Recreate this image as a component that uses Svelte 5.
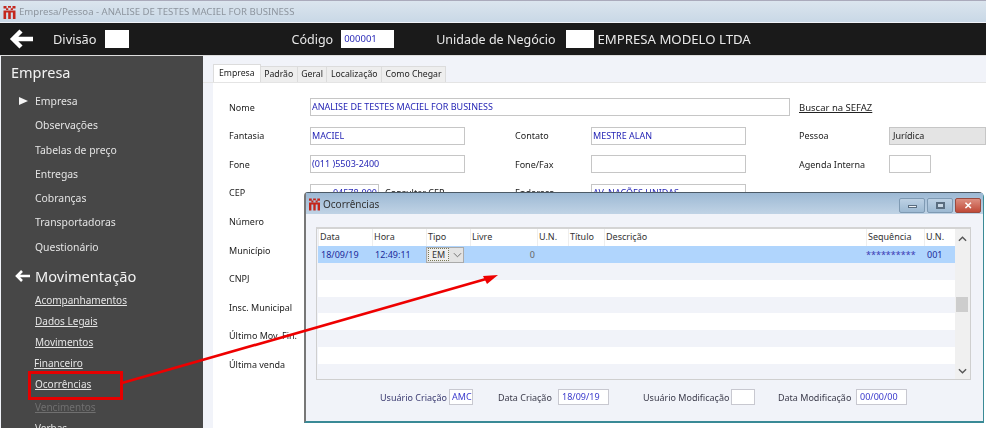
<script>
  const menu1 = ['Observações','Tabelas de preço','Entregas','Cobranças','Transportadoras','Questionário'];
  const menu2 = ['Acompanhamentos','Dados Legais','Movimentos','Financeiro','Ocorrências','Vencimentos','Verbas'];
  const cols = ['Data','Hora','Tipo','Livre','U.N.','Título','Descrição','Sequência','U.N.'];
  const blank = [0,1,2,3,4,5,6];
</script>

{#snippet logo()}
  <svg class="logo" viewBox="0 0 12 13" aria-hidden="true">
    <path fill="#c4261c" d="M0 0h3v2.4H0zM4.5 0h3v1.8h-3zM9 0h3v2.4H9zM2.6 2.2h2.2v1.8H2.6zM7.2 2.2h2.2v1.8H7.2zM0 4.4h12v2H0zM0 5h2.6v8H0zM4.7 5h2.6v8H4.7zM9.4 5H12v8H9.4z"/>
  </svg>
{/snippet}

<div class="app">
  <div class="titlebar">{@render logo()}<span>Empresa/Pessoa - ANALISE DE TESTES MACIEL FOR BUSINESS</span></div>

  <header class="topbar">
    <svg class="back" viewBox="0 0 24 20" width="24" height="20" aria-hidden="true"><path d="M24 10H5M12 2l-8 8 8 8" fill="none" stroke="#fff" stroke-width="4.4"/></svg>
    <span class="t-div">Divisão</span><span class="box b-div"></span>
    <span class="t-cod">Código</span><span class="box b-cod">000001</span>
    <span class="t-un">Unidade de Negócio</span><span class="box b-un"></span>
    <span class="t-emp">EMPRESA MODELO LTDA</span>
  </header>

  <div class="body">
    <aside class="side">
      <h2 class="h1">Empresa</h2>
      <ul class="m1">
        <li class="active"><span class="tri"></span>Empresa</li>
        {#each menu1 as m}<li>{m}</li>{/each}
      </ul>
      <h2 class="h2">
        <svg viewBox="0 0 16 14" width="16" height="14" aria-hidden="true"><path d="M16 7H3M8 2 3 7l5 5" fill="none" stroke="#fff" stroke-width="2.6"/></svg>
        Movimentação
      </h2>
      <ul class="m2">
        {#each menu2 as m, i}<li class:dim={i===5} class:out={i===3}>{m}</li>{/each}
      </ul>
    </aside>

    <main class="main">
      <nav class="tabs">
        <span class="tab sel">Empresa</span><span class="tab">Padrão</span><span class="tab">Geral</span><span class="tab">Localização</span><span class="tab">Como Chegar</span>
      </nav>
      <section class="form">
        <span class="lb">Nome</span><span class="in wide">ANALISE DE TESTES MACIEL FOR BUSINESS</span><a href="#a" class="link">Buscar na SEFAZ</a>
        <span class="lb">Fantasia</span><span class="in">MACIEL</span><span class="lb c2">Contato</span><span class="in">MESTRE ALAN</span><span class="lb c3">Pessoa</span><span class="in grey">Jurídica</span>
        <span class="lb">Fone</span><span class="in">(011 )5503-2400</span><span class="lb c2">Fone/Fax</span><span class="in"></span><span class="lb c3">Agenda Interna</span><span class="in short"></span>
        <span class="lb">CEP</span><span class="cepwrap"><span class="in cep">04578-000</span><span>Consultar CEP</span></span><span class="lb c2">Endereço</span><span class="in">AV. NAÇÕES UNIDAS</span>
        <span class="lb">Número</span>
        <span class="lb">Município</span>
        <span class="lb">CNPJ</span>
        <span class="lb">Insc. Municipal</span>
        <span class="lb">Último Mov. Fin.</span>
        <span class="lb">Última venda</span>
      </section>
    </main>
  </div>

  <div class="win">
    <div class="wt">
      {@render logo()}<span class="wtt">Ocorrências</span>
      <div class="wbtns">
        <span class="wb"><i class="mn"></i></span><span class="wb"><i class="mx"></i></span><span class="wb close">✕</span>
      </div>
    </div>
    <div class="wbody">
      <div class="grid">
        <div class="tbl">
          <div class="row head">{#each cols as c}<span>{c}</span>{/each}</div>
          <div class="row selrow">
            <span>18/09/19</span><span class="ctr">12:49:11</span>
            <span class="combo"><b>EM</b><svg viewBox="0 0 10 6" width="9" height="6" aria-hidden="true"><path d="M1 1l4 4 4-4" fill="none" stroke="#666"/></svg></span>
            <span class="num">0</span><span></span><span></span><span></span><span class="star">**********</span><span>001</span>
          </div>
          {#each blank as b}<div class="row" class:alt={b%2===0}></div>{/each}
        </div>
        <div class="sb">
          <svg viewBox="0 0 10 6" width="9" height="6" aria-hidden="true"><path d="M1 5l4-4 4 4" fill="none" stroke="#555" stroke-width="1.5"/></svg>
          <span class="thumb"></span>
          <svg viewBox="0 0 10 6" width="9" height="6" aria-hidden="true"><path d="M1 1l4 4 4-4" fill="none" stroke="#555" stroke-width="1.5"/></svg>
        </div>
      </div>
      <div class="foot">
        <span class="fl blue">Usuário Criação</span><span class="fi f1">AMC</span>
        <span class="fl g1">Data Criação</span><span class="fi f2">18/09/19</span>
        <span class="fl g2">Usuário Modificação</span><span class="fi f1 f3"></span>
        <span class="fl g3">Data Modificação</span><span class="fi f2 f4">00/00/00</span>
      </div>
    </div>
  </div>

  <svg class="arrow" width="986" height="428" viewBox="0 0 986 428" aria-hidden="true">
    <rect x="29.5" y="372.5" width="92" height="26" fill="none" stroke="#e60000" stroke-width="3"/>
    <path d="M122 383 486 279" stroke="#ee0000" stroke-width="2.6" fill="none"/>
    <path d="M498 275 483 276 487 284Z" fill="#ee0000"/>
  </svg>
</div>

<style>
  :global(body){margin:0;background:#f1f3f9}
  .app{position:relative;width:986px;height:428px;overflow:hidden;font-family:"Noto Sans","Open Sans",sans-serif;font-size:9px;color:#222;filter:blur(.3px)}
  .titlebar{height:22px;display:flex;align-items:center;gap:3px;padding-left:3px;box-sizing:border-box;background:linear-gradient(#dbe5ee,#c9d8e6);border-top:1px solid #aab;color:#8d959e;font-size:9.6px}
  .logo{flex:none;width:13px;height:13px;margin-top:1px}
  .topbar{height:33px;background:#1a1a1a;border-bottom:1px solid #ddd;color:#e8e8e8;display:flex;align-items:center;box-sizing:border-box;margin-top:1px}
  .back{margin-left:9px}
  .t-div{margin-left:20px;font-size:12.8px}
  .box{background:#fff;height:18px;display:block;box-sizing:border-box}
  .b-div{width:24px;margin-left:8px}
  .t-cod{margin-left:163px;font-size:12.5px}
  .b-cod{width:53px;margin-left:8px;color:#2a2ab8;font-size:9.5px;line-height:17px;padding-left:3px}
  .t-un{margin-left:42px;font-size:12.5px}
  .b-un{width:28px;margin-left:10px}
  .t-emp{margin-left:4px;font-size:13.2px}
  .body{display:flex;height:372px}
  .side{width:202px;margin-left:1px;background:#474747;color:#e4e4e4;flex:none;padding-left:10px;box-sizing:border-box}
  .side h2{font-weight:400;margin:0;color:#f2f2f2;font-size:14.5px;line-height:20px}
  .h1{padding-top:6px}
  .m1,.m2{list-style:none;margin:0;padding:0 0 0 24px}
  .m1{margin-top:9px;font-size:10.4px}
  .m1 li{height:24.3px;line-height:20px;position:relative}
  .tri{position:absolute;left:-16px;top:6px;border-left:9px solid #f4f4f4;border-top:4.5px solid transparent;border-bottom:4.5px solid transparent}
  .h2{margin-top:5px!important;display:flex;align-items:center;gap:5px;font-size:14.6px!important}
  .h2 svg{margin-left:3px}
  .m2{margin-top:4px}
  .m2 li{height:21px;line-height:20px;text-decoration:underline;font-size:10px}
  .m2 .dim{color:#707070;margin-top:2px}
  .m2 .out{margin-left:-1px}
  .main{flex:1;min-width:0;display:flex;flex-direction:column}
  .tabs{height:27px;box-sizing:border-box;padding:10px 0 0 10px;display:flex;align-items:flex-end;border-bottom:1px solid #e4e4e4}
  .tab{height:15px;line-height:14px;padding:0 3.5px;background:#eeeeee;border:1px solid #dcdcdc;border-bottom:0;margin-left:-1px;font-size:8.7px}
  .tab.sel{height:17px;background:#fff;line-height:16px;margin-left:0;padding:0 5px}
  .form{flex:1;margin-left:10px;background:#fff;padding:10px 0 0 16px;display:grid;grid-template-columns:81px 155px 50px 76px 155px 53px 90px 97px;grid-auto-rows:28.55px;align-items:center;overflow:hidden}
  .lb{grid-column:1}
  .form .c2{grid-column:4}
  .form .c3{grid-column:7}
  .in{height:18px;box-sizing:border-box;border:1px solid #c6c6c6;color:#2525b5;line-height:16px;padding-left:1px;white-space:nowrap;overflow:hidden;display:block}
  .wide{grid-column:2/7;width:480px}
  .link{grid-column:7/9;color:#222;font-size:9.5px}
  .in.grey{background:#e4e4e4;color:#222;padding-left:3px}
  .short{width:42px}
  .cepwrap{display:flex;align-items:center;gap:6px;white-space:nowrap}
  .cep{width:69px;text-align:right;padding-right:1px}
  .win{position:absolute;left:304px;top:192px;width:680px;height:231px;box-sizing:border-box;background:#f1f3f9;border:1px solid #4c5a66;border-left:2px solid #777;border-top-right-radius:5px;border-top-left-radius:4px;border-bottom:2px solid #3a8a96;border-right-color:#3a8a96;display:flex;flex-direction:column}
  .wt{height:21px;flex:none;display:flex;align-items:center;padding-left:3px;gap:3px;background:linear-gradient(#9db9d4,#c0d3e5);font-size:10px;color:#333}
  .wt .logo{width:11px;height:13px}
  .wbtns{margin-left:auto;margin-right:2px;display:flex;gap:2px;margin-top:3px}
  .wb{width:26px;height:15px;box-sizing:border-box;border:1px solid #7f9ab3;border-radius:2px;background:linear-gradient(#bdd1e4,#9db9d2);display:flex;align-items:center;justify-content:center}
  .wb .mn{width:9px;height:3px;background:#eef2f6;border:1px solid #5a6d80;box-sizing:border-box;margin-top:3px}
  .wb .mx{width:9px;height:7px;border:2px solid #5a6d80;box-sizing:border-box;background:#c9d8e6}
  .wb.close{background:linear-gradient(#dd8e80,#c04a38);border-color:#9a4a3f;color:#fff;font-size:10px;font-weight:700}
  .wbody{flex:1;padding:13px 12px 0 10px}
  .grid{height:153px;box-sizing:border-box;border:1px solid #cfcfcf;border-top:2px solid #d4d4d4;background:#f1f3f9;display:flex;justify-content:space-between;padding-left:1px;width:655px}
  .tbl{flex:1;overflow:hidden}
  .row{display:grid;grid-template-columns:54px 54px 44px 67px 31px 36px 262px 58px 31px;height:16.8px;align-items:center;background:#fff;line-height:16px}
  .row.alt{background:#f1f3f9}
  .head{height:17px;color:#333}
  .head span{padding-left:1px;border-left:1px solid #eee;box-sizing:border-box;height:100%}
  .selrow{background:#b0d5fd;color:#202a9a;height:17px}
  .selrow span{padding-left:3px}
  .ctr{padding-left:3px!important}
  .combo{display:flex;align-items:center;gap:4px;height:16px;box-sizing:border-box;border:1px solid #aaa;background:#e3e3e3;padding-left:1px!important;width:38px;color:#333}
  .combo b{font-weight:400;background:#eee;border:1px dotted #775;line-height:11px;padding:0 3px}
  .num{text-align:right;padding-right:2px;color:#666}
  .star{color:#3b3bb5;padding-left:0!important}
  .sb{width:15px;background:#f0f0f0;display:flex;flex-direction:column;align-items:center;padding:7px 0 5px;box-sizing:border-box;position:relative;justify-content:space-between}
  .thumb{position:absolute;top:68px;left:1px;width:12px;height:15px;background:#cdcdcd}
  .foot{display:flex;align-items:center;margin-top:9px;padding-left:64px;color:#3a3a4a}
  .fi{height:16px;box-sizing:border-box;border:1px solid #c8c8d0;background:#fff;color:#3a3acc;line-height:14px;padding-left:2px;display:block}
  .blue{color:#3a3a70}
  .fl{white-space:nowrap;width:63px}
  .f1{width:24px;margin-left:6px}
  .f2{width:51px;margin-left:7px;padding-left:3px}
  .g1{margin-left:25px;width:53px}
  .g2{margin-left:34px;width:80px}
  .f3{margin-left:8px}
  .g3{margin-left:23px;width:69px}
  .f4{margin-left:9px}
  .arrow{position:absolute;left:0;top:0;pointer-events:none}
</style>
